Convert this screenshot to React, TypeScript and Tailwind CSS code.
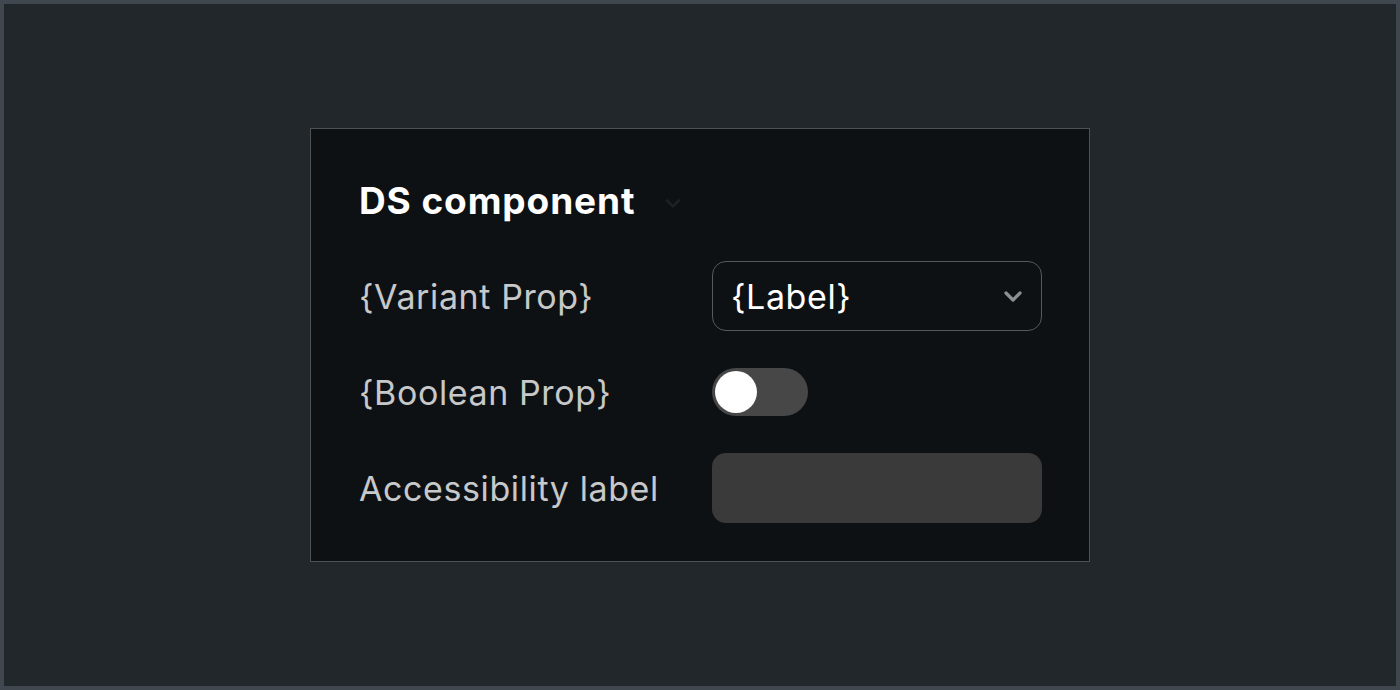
function Chevron({ className }: { className: string }) {
  return (
    <svg viewBox="0 0 24 24" fill="none" className={className}>
      <path
        d="M5 9l7 7 7-7"
        stroke="currentColor"
        strokeWidth="3.2"
        strokeLinecap="round"
        strokeLinejoin="round"
      />
    </svg>
  );
}

function Row({ label, children }: { label: string; children: React.ReactNode }) {
  return (
    <div className="flex h-[70px] items-center">
      <div className="w-[353px] text-[34px] tracking-[0.6px] text-[#c6c8ca]">{label}</div>
      {children}
    </div>
  );
}

export default function App() {
  return (
    <div
      className="flex h-[690px] w-[1400px] items-center justify-center border-4 border-[#41474e] bg-[#22272b]"
      style={{ fontFamily: "Inter, 'Noto Sans', sans-serif" }}
    >
      <div className="h-[434px] w-[780px] border border-[#4d5257] bg-[#0e1114] pb-[38px] pl-[48px] pr-[47px] pt-[48px]">
        <div className="flex h-[48px] items-center">
          <h1 className="text-[37px] font-bold tracking-[0.9px] text-white">DS component</h1>
          <Chevron className="ml-[28px] mt-1 h-[20px] w-[20px] text-[#1d2125]" />
        </div>

        <div className="mt-[36px] flex flex-col gap-[26px]">
          <Row label="{Variant Prop}">
            <div className="flex h-[70px] w-[330px] items-center justify-between rounded-[14px] border-[1.5px] border-[#56595d] pl-[18px] pr-[16px]">
              <span className="text-[34px] tracking-[0.6px] text-white">{"{Label}"}</span>
              <Chevron className="h-[24px] w-[24px] text-[#8b9095]" />
            </div>
          </Row>

          <Row label="{Boolean Prop}">
            <div className="flex h-[48px] w-[96px] items-center rounded-full bg-[#474747] pl-[3px]">
              <div className="h-[42px] w-[42px] rounded-full bg-white" />
            </div>
          </Row>

          <Row label="Accessibility label">
            <div className="h-[70px] w-[330px] rounded-[14px] bg-[#3a3a3a]" />
          </Row>
        </div>
      </div>
    </div>
  );
}
